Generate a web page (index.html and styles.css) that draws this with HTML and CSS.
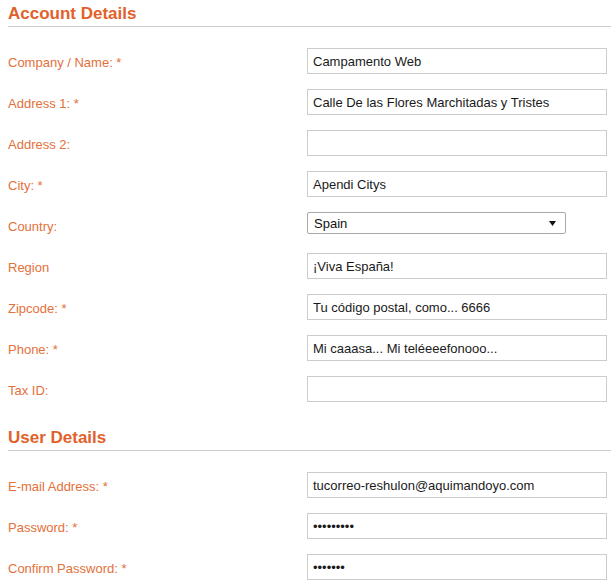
FILE: index.html
```html
<!DOCTYPE html>
<html lang="es">
<head>
  <meta charset="UTF-8" />
  <title>Account Details</title>
  <link rel="stylesheet" href="styles.css">
</head>
<body>
  <form class="account">
    <section class="block">
      <h2>Account Details</h2>
      <div class="rows">
        <div class="row">
          <label for="company">Company / Name: *</label>
          <input type="text" id="company" value="Campamento Web">
        </div>
        <div class="row">
          <label for="addr1">Address 1: *</label>
          <input type="text" id="addr1" value="Calle De las Flores Marchitadas y Tristes">
        </div>
        <div class="row">
          <label for="addr2">Address 2:</label>
          <input type="text" id="addr2" value="">
        </div>
        <div class="row">
          <label for="city">City: *</label>
          <input type="text" id="city" value="Apendi Citys">
        </div>
        <div class="row">
          <label for="country">Country:</label>
          <span class="pick">
            <select id="country">
              <option>Spain</option>
            </select>
            <svg class="arrow" width="7" height="5" viewBox="0 0 7 5"><path d="M0 0h7L3.5 5z" fill="#111"/></svg>
          </span>
        </div>
        <div class="row">
          <label for="region">Region</label>
          <input type="text" id="region" value="¡Viva España!">
        </div>
        <div class="row">
          <label for="zip">Zipcode: *</label>
          <input type="text" id="zip" value="Tu código postal, como... 6666">
        </div>
        <div class="row">
          <label for="phone">Phone: *</label>
          <input type="text" id="phone" value="Mi caaasa... Mi teléeeefonooo...">
        </div>
        <div class="row">
          <label for="taxid">Tax ID:</label>
          <input type="text" id="taxid" value="">
        </div>
      </div>
    </section>

    <section class="block">
      <h2>User Details</h2>
      <div class="rows">
        <div class="row">
          <label for="email">E-mail Address: *</label>
          <input type="text" id="email" value="tucorreo-reshulon@aquimandoyo.com">
        </div>
        <div class="row">
          <label for="pass">Password: *</label>
          <input type="password" id="pass" value="123456789">
        </div>
        <div class="row">
          <label for="pass2">Confirm Password: *</label>
          <input type="password" id="pass2" value="1234567">
        </div>
      </div>
    </section>
  </form>
</body>
</html>
```

FILE: styles.css
```css
body {
  margin: 0;
  padding: 0 0 0 8px;
  background: #fff;
  font-family: Arial, "Liberation Sans", Helvetica, sans-serif;
  font-size: 13px;
}
.block + .block {
  margin-top: 22px;
}
h2 {
  margin: 0;
  padding: 4px 0 2px;
  line-height: 20px;
  font-size: 17px;
  font-weight: bold;
  color: #e0622a;
  border-bottom: 1px solid #cfcfcf;
}
.rows {
  display: grid;
  row-gap: 15px;
  padding-top: 21px;
}
.row {
  display: grid;
  grid-template-columns: 299px 300px;
  height: 26px;
  align-items: center;
}
label {
  padding-top: 2px;
  color: #e4703a;
  font-size: 13px;
}
input {
  box-sizing: border-box;
  width: 300px;
  height: 26px;
  margin: 0;
  padding: 0 5px;
  border: 1px solid #cccccc;
  border-radius: 0;
  font-family: Arial, "Liberation Sans", Helvetica, sans-serif;
  font-size: 13px;
  color: #1a1a1a;
  background: #fff;
  outline: none;
}
.pick {
  position: relative;
  align-self: start;
  width: 259px;
  height: 22px;
}
select {
  appearance: none;
  -webkit-appearance: none;
  box-sizing: border-box;
  width: 259px;
  height: 22px;
  margin: 0;
  padding: 0 20px 0 6px;
  border: 1px solid #a9a9a9;
  border-radius: 2px;
  background: #fff;
  font-family: Arial, "Liberation Sans", Helvetica, sans-serif;
  font-size: 13px;
  color: #111;
}
.arrow {
  position: absolute;
  right: 10px;
  top: 9px;
  pointer-events: none;
}
```
